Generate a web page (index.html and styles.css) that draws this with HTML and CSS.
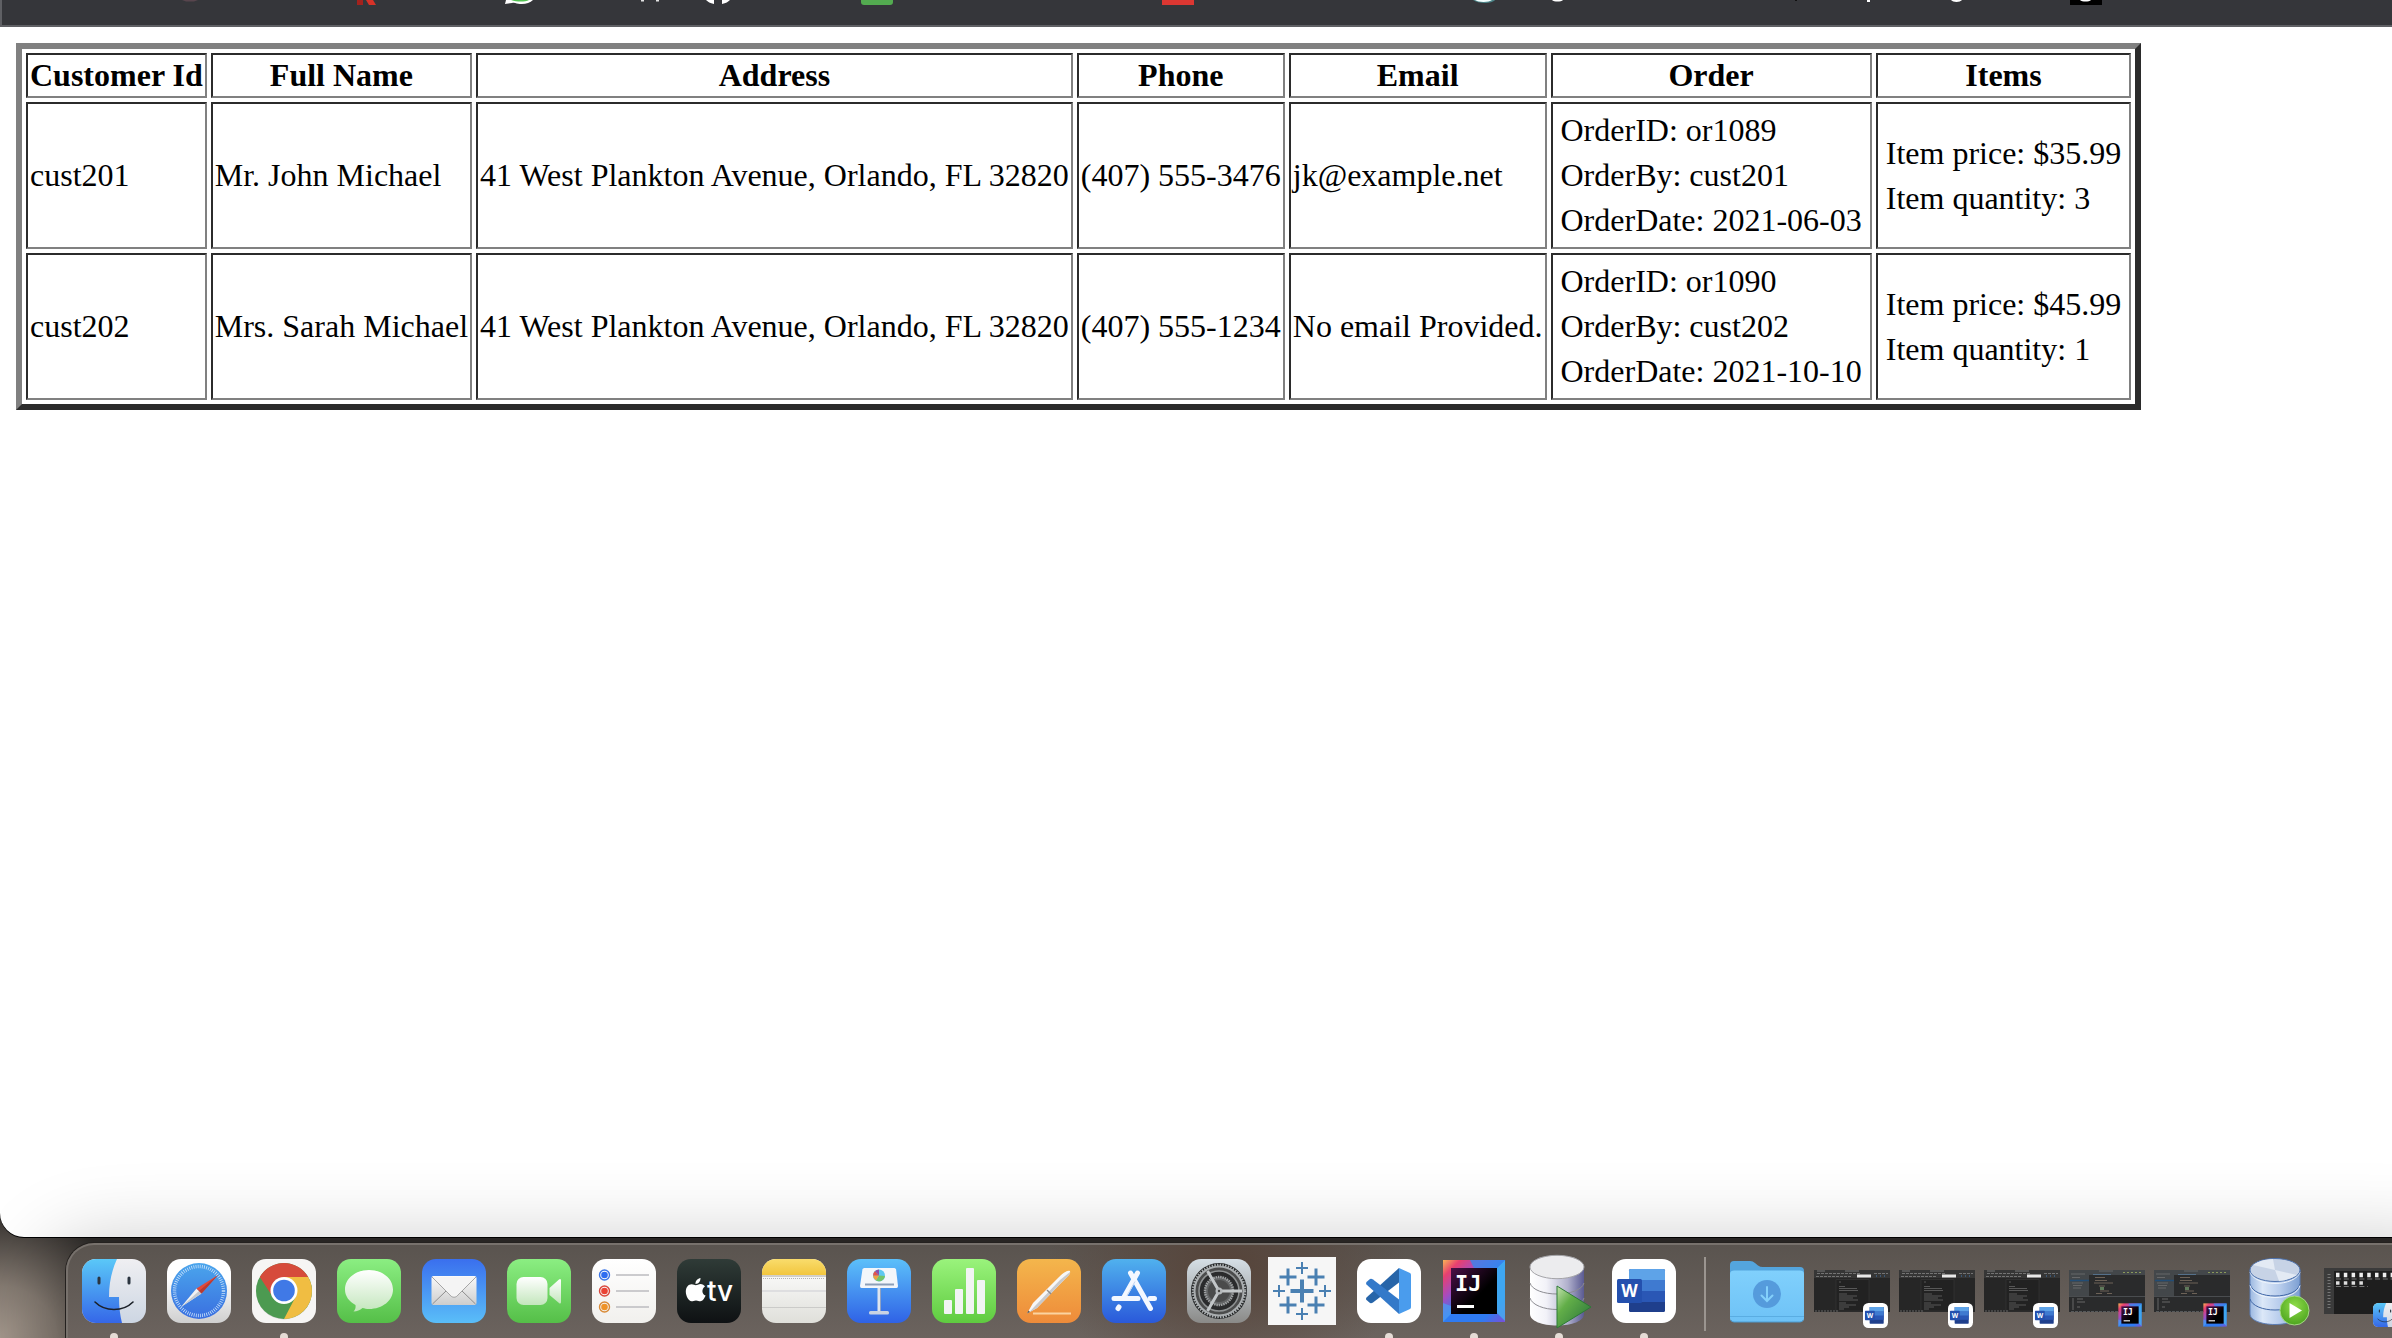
FILE: index.html
```html
<!DOCTYPE html>
<html lang="en">
<head>
<meta charset="utf-8">
<title>Customers</title>
<link rel="stylesheet" href="styles.css">
</head>
<body>
<svg class="sprites" width="0" height="0" aria-hidden="true">
  <defs>
    <linearGradient id="g-finder" x1="0" y1="0" x2="0" y2="1"><stop offset="0" stop-color="#5ac8f8"/><stop offset="1" stop-color="#3567e8"/></linearGradient>
    <linearGradient id="g-face" x1="0" y1="0" x2="0" y2="1"><stop offset="0" stop-color="#efeff2"/><stop offset="1" stop-color="#cdd6e3"/></linearGradient>
    <linearGradient id="g-white" x1="0" y1="0" x2="0" y2="1"><stop offset=".3" stop-color="#fff"/><stop offset="1" stop-color="#cfcfcf"/></linearGradient>
    <linearGradient id="g-paper" x1="0" y1="0" x2="0" y2="1"><stop offset="0" stop-color="#fff"/><stop offset="1" stop-color="#f1f0ed"/></linearGradient>
    <linearGradient id="g-note" x1="0" y1="0" x2="0" y2="1"><stop offset=".2" stop-color="#fafaf9"/><stop offset="1" stop-color="#dfdfda"/></linearGradient>
    <linearGradient id="g-yellow" x1="0" y1="0" x2="0" y2="1"><stop offset="0" stop-color="#f9dc6c"/><stop offset="1" stop-color="#f2c63e"/></linearGradient>
    <linearGradient id="g-safari" x1="0" y1="0" x2="0" y2="1"><stop offset="0" stop-color="#4aa5ec"/><stop offset="1" stop-color="#3a6fe0"/></linearGradient>
    <linearGradient id="g-green" x1="0" y1="0" x2="0" y2="1"><stop offset="0" stop-color="#8bee82"/><stop offset="1" stop-color="#55bf48"/></linearGradient>
    <linearGradient id="g-bubble" x1="0" y1="0" x2="0" y2="1"><stop offset="0" stop-color="#fff"/><stop offset="1" stop-color="#c3e6bc"/></linearGradient>
    <linearGradient id="g-mail" x1="0" y1="0" x2="0" y2="1"><stop offset="0" stop-color="#3a6fee"/><stop offset="1" stop-color="#5abef8"/></linearGradient>
    <linearGradient id="g-letter" x1="0" y1="0" x2="0" y2="1"><stop offset="0" stop-color="#fafafa"/><stop offset="1" stop-color="#cdcdcd"/></linearGradient>
    <linearGradient id="g-tv" x1="0" y1="0" x2="0" y2="1"><stop offset="0" stop-color="#2f3b37"/><stop offset="1" stop-color="#0e1113"/></linearGradient>
    <linearGradient id="g-keynote" x1="0" y1="0" x2="0" y2="1"><stop offset="0" stop-color="#5cc0fa"/><stop offset="1" stop-color="#2f62e6"/></linearGradient>
    <linearGradient id="g-numbers" x1="0" y1="0" x2="0" y2="1"><stop offset="0" stop-color="#9af37c"/><stop offset="1" stop-color="#5fcb40"/></linearGradient>
    <linearGradient id="g-pages" x1="0" y1="0" x2="0" y2="1"><stop offset="0" stop-color="#f4b64c"/><stop offset="1" stop-color="#ee8b3a"/></linearGradient>
    <linearGradient id="g-store" x1="0" y1="0" x2="0" y2="1"><stop offset="0" stop-color="#50b1ee"/><stop offset="1" stop-color="#2a59da"/></linearGradient>
    <linearGradient id="g-gear" x1="0" y1="0" x2="0" y2="1"><stop offset="0" stop-color="#d5dfe6"/><stop offset="1" stop-color="#8a8a88"/></linearGradient>
    <linearGradient id="g-ij" x1="0" y1="0" x2="1" y2="1"><stop offset="0" stop-color="#f9b456"/><stop offset=".14" stop-color="#e8406f"/><stop offset=".32" stop-color="#a54cc0"/><stop offset=".5" stop-color="#2f7bf2"/><stop offset=".8" stop-color="#2f7bf2"/><stop offset="1" stop-color="#7a4fd8"/></linearGradient>
    <linearGradient id="g-ijblack" x1="0" y1="0" x2="1" y2="1"><stop offset="0" stop-color="#4a0f48"/><stop offset=".6" stop-color="#000"/></linearGradient>
    <linearGradient id="g-db" x1="0" y1="0" x2="1" y2="0"><stop offset="0" stop-color="#fff"/><stop offset=".3" stop-color="#f2f2f8"/><stop offset=".7" stop-color="#b0b0cc"/><stop offset="1" stop-color="#5a5a92"/></linearGradient>
    <linearGradient id="g-play" x1="0" y1="0" x2="1" y2="1"><stop offset="0" stop-color="#c5e3b0"/><stop offset=".35" stop-color="#62ae48"/><stop offset="1" stop-color="#25703a"/></linearGradient>
    <linearGradient id="g-folder" x1="0" y1="0" x2="0" y2="1"><stop offset="0" stop-color="#80d0fc"/><stop offset="1" stop-color="#6ec2f6"/></linearGradient>
    <linearGradient id="g-bluedb" x1="0" y1="0" x2="1" y2="0"><stop offset="0" stop-color="#9ab7e0"/><stop offset=".25" stop-color="#dce8f8"/><stop offset=".6" stop-color="#b7ccec"/><stop offset="1" stop-color="#7c9fd2"/></linearGradient>
    <radialGradient id="g-ball" cx=".5" cy=".35" r=".65"><stop offset="0" stop-color="#8fdc4a"/><stop offset="1" stop-color="#4da51f"/></radialGradient>
  </defs>

  <symbol id="i-finder" viewBox="0 0 64 64">
    <rect width="64" height="64" rx="14" fill="url(#g-face)"/>
    <path d="M35 0H14A14 14 0 0 0 0 14V50A14 14 0 0 0 14 64H40C38 56 37 48 37 38H27C27 23 30 11 35 0Z" fill="url(#g-finder)"/>
    <path d="M17 19v5M47 19v5" stroke="#2b3540" stroke-width="3" stroke-linecap="round"/>
    <path d="M13 43C23 53 41 53 51 43" fill="none" stroke="#1b2028" stroke-width="1.6" stroke-linecap="round"/>
  </symbol>

  <symbol id="i-word" viewBox="0 0 64 64">
    <rect width="64" height="64" rx="14" fill="#fff"/>
    <rect x="17" y="10" width="36" height="43" rx="1.5" fill="#1f3f8c"/>
    <path d="M17 21h36v22H17z" fill="#2a57b5"/>
    <path d="M17 21h36v11H17z" fill="#3f7ad0"/>
    <path d="M18.500 10h33a1.500 1.500 0 0 1 1.500 1.500V21H17v-9.500a1.500 1.500 0 0 1 1.500-1.500z" fill="#5ea3e8"/>
    <rect x="5" y="20" width="25" height="24" rx="1.500" fill="#2450ae"/>
    <text class="word-letter" x="17.500" y="38" text-anchor="middle">W</text>
  </symbol>

  <symbol id="i-idea" viewBox="0 0 64 64">
    <rect x="1" y="1" width="62" height="62" fill="url(#g-ij)"/>
    <path d="M63 1v61L55 54V9z" fill="#44b4f0" opacity=".75"/>
    <path d="M1 63V44l8 3v8z" fill="#4aa0f4" opacity=".7"/>
    <path d="M28 1h35l-8 8H32z" fill="#3a86ee" opacity=".8"/>
    <rect x="9" y="9" width="46" height="46" fill="url(#g-ijblack)"/>
    <text class="idea-letters" x="13" y="32">IJ</text>
    <path d="M15 46h17v3H15z" fill="#fff"/>
  </symbol>

  <symbol id="i-docs" viewBox="0 0 76 42">
    <rect width="76" height="42" fill="#262626"/>
    <path d="M0 0h76v8H0z" fill="#363636"/>
    <path d="M3 1h8M31 1h14" stroke="#8a8a8a" stroke-width=".8"/>
    <path d="M3 3.500h44M60 3.500h14M2 6.500h36" stroke="#737373" stroke-width="1" stroke-dasharray="3 1"/>
    <path d="M43 4.500h14v3H43z" fill="#e8e8e8"/>
    <path d="M62 6h10" stroke="#4378b0" stroke-dasharray="1 3"/>
    <path d="M22 9.500h33V41H22z" fill="#222" stroke="#3b3b3b" stroke-width=".6"/>
    <path d="M25 12h2M25 16.500h6M25 18.500h18M25 20.500h19M25 24h8M25 26h18M25 28h14M25 30h19M25 33h7M25 35h17M25 37h10M25 39h5" stroke="#666" stroke-width=".8"/>
    <path d="M1 41h24M62 41h12" stroke="#777" stroke-width=".8" stroke-dasharray="2 1"/>
  </symbol>

  <symbol id="i-code" viewBox="0 0 76 42">
    <rect width="76" height="42" fill="#2a2b2c"/>
    <path d="M0 0h76v5H0zM0 0h20v27H0z" fill="#43474a"/>
    <path d="M30 1h14M2 4h14" stroke="#777" stroke-width=".7"/>
    <path d="M54 2.500h20" stroke="#8a9a5a" stroke-width="1" stroke-dasharray="2 2"/>
    <path d="M24 4.500h18" stroke="#54708a"/>
    <path d="M1 10.500h19" stroke="#234d75" stroke-width="1.500"/>
    <path d="M3 7.500h8M3 13h11M4 15.500h9M4 18h8" stroke="#777" stroke-width=".7"/>
    <path d="M26 7.500h10M26 10.500h12M25 13h19M30 16h6M31 21h9M27 23.500h6M38 23.500h5" stroke="#75695c" stroke-width=".9"/>
    <path d="M31 17h4v3h-4z" fill="#5f7a5b"/>
    <path d="M0 26.500h76" stroke="#4a4d50"/>
    <path d="M4 28v12M8 29h6M8 32h8M8 37h3" stroke="#777" stroke-width=".8"/>
    <path d="M2 41.500h50" stroke="#55585a" stroke-dasharray="3 1"/>
  </symbol>
</svg>

<div class="window">
  <header class="toolbar">
    <svg class="bookmarks" width="2390" height="5" viewBox="2 0 2390 5" aria-hidden="true">
      <path d="M182 0h16l-4 1.500h-8z" fill="#58454d"/>
      <path d="M357 0h6v5h-6z" fill="#a3221d"/><path d="M366 0h7l3 5h-7z" fill="#d63228"/>
      <path d="M506 0h27c-3 3-8 4.500-13 4c-3 0-5-2-8-1l-7 1z" fill="#fff"/><path d="M511 0h18c-4 2-12 2-18 0z" fill="#53c353"/>
      <path d="M641 0h3v1.500h-3zM656 0h3v1.500h-3z" fill="#e4e4e4"/>
      <path d="M706 0h8v4c-4-1-6-2-8-4zM722 0h8c-2 2-4 3-8 4z" fill="#fff"/>
      <path d="M861 0h32v2a3 3 0 0 1-3 3h-26a3 3 0 0 1-3-3z" fill="#53ab50"/>
      <path d="M1162 0h32v5h-32z" fill="#dc3732"/>
      <path d="M1473 0h22c-3 4-17 4-22 0z" fill="#4c8588"/><path d="M1475 0h17c-3 2.500-14 2.500-17 0z" fill="#f3ffff"/>
      <path d="M1552 0h11c-2 2-9 2-11 0z" fill="#fff"/>
      <path d="M1795 0h2v1h-2z" fill="#111"/>
      <path d="M1867 0h3v2h-3z" fill="#fff"/>
      <path d="M1951 0h11c-2 2.500-9 2.500-11 0z" fill="#fff"/>
      <path d="M2070 0h32v5h-32z" fill="#000"/><path d="M2080 0h11c-2 2-9 2-11 0z" fill="#fff"/>
    </svg>
  </header>

  <main class="page">
    <table class="customers">
      <thead>
        <tr><th>Customer Id</th><th>Full Name</th><th>Address</th><th>Phone</th><th>Email</th><th>Order</th><th>Items</th></tr>
      </thead>
      <tbody>
        <tr>
          <td>cust201</td><td>Mr. John Michael</td><td>41 West Plankton Avenue, Orlando, FL 32820</td><td>(407) 555-3476</td><td>jk@example.net</td>
          <td><table class="details"><tr><td>OrderID: or1089</td></tr><tr><td>OrderBy: cust201</td></tr><tr><td>OrderDate: 2021-06-03</td></tr></table></td>
          <td><table class="details"><tr><td>Item price: $35.99</td></tr><tr><td>Item quantity: 3</td></tr></table></td>
        </tr>
        <tr>
          <td>cust202</td><td>Mrs. Sarah Michael</td><td>41 West Plankton Avenue, Orlando, FL 32820</td><td>(407) 555-1234</td><td>No email Provided.</td>
          <td><table class="details"><tr><td>OrderID: or1090</td></tr><tr><td>OrderBy: cust202</td></tr><tr><td>OrderDate: 2021-10-10</td></tr></table></td>
          <td><table class="details"><tr><td>Item price: $45.99</td></tr><tr><td>Item quantity: 1</td></tr></table></td>
        </tr>
      </tbody>
    </table>
  </main>
</div>

<nav class="dock" aria-label="Dock">
  <div class="apps">
    <button class="app running" aria-label="Finder"><svg viewBox="0 0 64 64"><use href="#i-finder" width="64" height="64"/></svg></button>

    <button class="app" aria-label="Safari"><svg viewBox="0 0 64 64">
      <rect width="64" height="64" rx="14" fill="url(#g-white)"/>
      <circle cx="32" cy="32" r="28" fill="url(#g-safari)"/>
      <circle cx="32" cy="32" r="24.500" fill="none" stroke="#c9e2fa" stroke-width="3.500" stroke-dasharray=".8 1.340"/>
      <path d="M14 48L29.500 29.500L34.500 34.500Z" fill="#f2f2f2"/>
      <path d="M51 16L29.500 29.500L34.500 34.500Z" fill="#e0493c"/>
      <path d="M14 48L34.500 34.500L32 32Z" fill="#c4c9cf"/><path d="M51 16L34.500 34.500L32 32Z" fill="#b93a31"/>
    </svg></button>

    <button class="app running" aria-label="Chrome"><svg viewBox="0 0 64 64">
      <rect width="64" height="64" rx="14" fill="#f6f5f4"/>
      <circle cx="32" cy="32.500" r="28" fill="#b9b9b9" opacity=".6"/>
      <circle cx="32" cy="32" r="28" fill="#4c9a51"/>
      <path d="M7.800 18A28 28 0 0 1 56.200 18H32L20.500 37.600Z" fill="#d64b3b"/>
      <path d="M56.200 18A28 28 0 0 1 32 60L43.500 38L32 18Z" fill="#f0bd42"/>
      <circle cx="32" cy="31.500" r="13.500" fill="#fff"/><circle cx="32" cy="31.500" r="10.800" fill="#4079e6"/>
    </svg></button>

    <button class="app" aria-label="Messages"><svg viewBox="0 0 64 64">
      <rect width="64" height="64" rx="14" fill="url(#g-green)"/>
      <path d="M32 11C18.500 11 8 19.500 8 30.500C8 37 12 42.500 18.500 46C19 49 18 51 16.500 52.500C20 52.500 23 51 25.500 49C27.500 49.500 29.500 50 32 50C45.500 50 56 41.500 56 30.500S45.500 11 32 11Z" fill="url(#g-bubble)"/>
    </svg></button>

    <button class="app" aria-label="Mail"><svg viewBox="0 0 64 64">
      <rect width="64" height="64" rx="14" fill="url(#g-mail)"/>
      <rect x="9.500" y="17" width="45" height="29" rx="2" fill="url(#g-letter)"/>
      <path d="M10.500 45L24 32M53.500 45L40 32" stroke="#8e8e8e"/>
      <path d="M10 18L28 36C30 39 34 39 36 36L54 18" fill="#f4f4f4" stroke="#a5a5a5"/>
    </svg></button>

    <button class="app" aria-label="FaceTime"><svg viewBox="0 0 64 64">
      <rect width="64" height="64" rx="14" fill="url(#g-green)"/>
      <rect x="9.500" y="18" width="31" height="28" rx="7" fill="url(#g-bubble)"/>
      <path d="M42.500 29L52 20.500C53 19.500 54 20 54 21.500V43C54 44.500 53 45 52 44L42.500 36Z" fill="url(#g-bubble)"/>
    </svg></button>

    <button class="app" aria-label="Reminders"><svg viewBox="0 0 64 64">
      <rect width="64" height="64" rx="14" fill="url(#g-paper)"/>
      <g fill="none" stroke-width="1.400"><circle cx="12.500" cy="16" r="5" stroke="#3a74e6"/><circle cx="12.500" cy="32" r="5" stroke="#d9473c"/><circle cx="12.500" cy="48" r="5" stroke="#d98a36"/></g>
      <circle cx="12.500" cy="16" r="3.300" fill="#2f6df0"/><circle cx="12.500" cy="32" r="3.300" fill="#ea4335"/><circle cx="12.500" cy="48" r="3.300" fill="#ee9328"/>
      <path d="M24 16h33M24 32h33M24 48h33" stroke="#bcbcc0" stroke-width="1.600"/>
    </svg></button>

    <button class="app" aria-label="TV"><svg viewBox="0 0 64 64">
      <rect width="64" height="64" rx="14" fill="url(#g-tv)"/>
      <path d="M23.500 19C23.700 22 21.500 25 18.500 25C18.200 22 20.800 19.300 23.500 19ZM18.800 26.300C20 26.300 21.500 25 23.600 25C25.500 25 27 26 28 27.400C24.200 30 24.800 35 28.600 36.600C27.500 39.500 25.500 42.300 23.400 42.300C21.600 42.300 21.200 41.400 19 41.400C16.800 41.400 16.200 42.300 14.600 42.300C11.500 42.300 8.800 37 8.800 32.600C8.800 28 11.600 25.300 14.600 25.300C16.500 25.300 17.800 26.300 18.800 26.300Z" fill="#fff"/>
      <text class="tv-letters" x="30" y="42">tv</text>
    </svg></button>

    <button class="app" aria-label="Notes"><svg viewBox="0 0 64 64">
      <rect width="64" height="64" rx="14" fill="url(#g-note)"/>
      <path d="M0 16V14A14 14 0 0 1 14 0H50A14 14 0 0 1 64 14V16Z" fill="url(#g-yellow)"/>
      <path d="M0 17h64" stroke="#aaa69c"/><path d="M1 19.500h62" stroke="#b5b5b5" stroke-dasharray="1 1"/>
      <path d="M0 32h64" stroke="#dedee0" stroke-width="2"/><path d="M0 48.500h64" stroke="#cbcbc9"/>
    </svg></button>

    <button class="app" aria-label="Keynote"><svg viewBox="0 0 64 64">
      <rect width="64" height="64" rx="14" fill="url(#g-keynote)"/>
      <path d="M30.500 28h3v25h-3z" fill="#dfe5ee"/><path d="M33 28h1v25h-1z" fill="#8fa2c4"/>
      <rect x="22" y="52" width="20" height="3.500" rx="1.500" fill="#c9d3e3"/>
      <path d="M17 9H47.500L49 10L51 27Q51 29 49.500 29H14.500Q13 29 13 27L15.500 10Z" fill="#f3f6fa"/>
      <path d="M18 24.500h29v2H18z" fill="#8c9fb8"/>
      <circle cx="32" cy="16.500" r="6" fill="#5ec8f0"/>
      <path d="M32 16.500L38 17A6 6 0 0 1 29 21.500Z" fill="#74c46a"/><path d="M32 16.500L29 21.500A6 6 0 0 1 26 16.500Z" fill="#f0a23c"/><path d="M32 16.500L26 16.500A6 6 0 0 1 28 12Z" fill="#e5534b"/><path d="M32 16.500L28 12A6 6 0 0 1 32 10.500Z" fill="#8e4ea6"/>
    </svg></button>

    <button class="app" aria-label="Numbers"><svg viewBox="0 0 64 64">
      <rect width="64" height="64" rx="14" fill="url(#g-numbers)"/>
      <g fill="#f1f4f3"><rect x="12" y="41" width="8" height="14" rx="1"/><rect x="23" y="30" width="8" height="25" rx="1"/><rect x="34" y="9" width="8" height="46" rx="1"/><rect x="45" y="21" width="8" height="34" rx="1"/></g>
    </svg></button>

    <button class="app" aria-label="Pages"><svg viewBox="0 0 64 64">
      <rect width="64" height="64" rx="14" fill="url(#g-pages)"/>
      <path d="M16 54.500h38" stroke="#fbd3a0" stroke-width="2"/>
      <path d="M53 12C50 11 46 14 41 19L16 44L10 54.500L20 49L45 23C50 18 54 15 53 12Z" fill="#f7f7f7"/>
      <path d="M53 13C54 15 50 18 45 23L20 49L12 53.500L18 47L43 21Z" fill="#c9c9cb"/>
      <path d="M30 31l4 4" stroke="#8c8c8c" stroke-width="1.500"/><path d="M10 54.500l1.500-3 1.500 1.500z" fill="#555"/>
    </svg></button>

    <button class="app" aria-label="App Store"><svg viewBox="0 0 64 64">
      <rect width="64" height="64" rx="14" fill="url(#g-store)"/>
      <g stroke-width="5" stroke-linecap="round" stroke="#f4f8ff"><path d="M28.500 14L48.500 49.500"/><path d="M12 39.500H36M48 39.500H52.500"/><path d="M35.500 14L22 38"/><path d="M17 48L16 49.500"/></g>
      <path d="M33 22.500L25 36.500" stroke="#c4d7f2" stroke-width="1"/>
    </svg></button>

    <button class="app" aria-label="System Preferences"><svg viewBox="0 0 64 64">
      <rect width="64" height="64" rx="14" fill="url(#g-gear)"/>
      <circle cx="32" cy="32" r="28" fill="#1f2122"/>
      <circle cx="32" cy="32" r="24.500" fill="#4b4c4c" stroke="#a9adaf" stroke-width="2"/>
      <circle cx="32" cy="32" r="26" fill="none" stroke="#a9adaf" stroke-width="2.500" stroke-dasharray="1.500 1.220"/>
      <circle cx="32" cy="32" r="20" fill="#2a2b2c" stroke="#8f9293" stroke-width="1.500"/>
      <circle cx="32" cy="32" r="14" fill="#636566" stroke="#9ea1a2" stroke-width="2.500" stroke-dasharray="1.500 .8"/>
      <circle cx="32" cy="32" r="11" fill="#4a4b4b"/>
      <path d="M32 32H55M32 32L20.500 12M32 32L20.500 52" stroke="#c2c6c8" stroke-width="3"/>
      <circle cx="32" cy="32" r="3.500" fill="#b5b9bb"/><circle cx="32" cy="32" r="1.200" fill="#444"/>
    </svg></button>

    <button class="app" aria-label="Tableau"><svg viewBox="0 0 64 64">
      <rect x="-4" y="-2" width="68" height="68" fill="#f6f6f6"/>
      <g stroke="#4a80b2" fill="none">
        <path d="M30 20.500v23M18.500 32h23" stroke-width="4"/>
        <path d="M16 9.500v17M7.500 18h17M44 9.500v17M35.500 18h17M16 37.500v17M7.500 46h17M44 37.500v17M35.500 46h17" stroke-width="3"/>
        <path d="M30 3v12M24 9h12M30 49v12M24 55h12M7 26v12M1 32h12M53 26v12M47 32h12" stroke-width="2"/>
      </g>
    </svg></button>

    <button class="app running" aria-label="Visual Studio Code"><svg viewBox="0 0 64 64">
      <rect width="64" height="64" rx="14" fill="#fff"/>
      <path d="M42 9L9.500 38.500Q8.500 40 9.500 41L13 44Q14.500 44.500 16 43.500L42 23.500Z" fill="#2765a9"/>
      <path d="M42 55L9.500 25.500Q8.500 24 9.500 23L13 20Q14.500 19.500 16 20.500L42 40.500Z" fill="#3379c9"/>
      <path d="M42 9L53 14Q54 14.500 54 16V48Q54 49.500 53 50L42 55Z" fill="#4a9ced"/>
    </svg></button>

    <button class="app running" aria-label="IntelliJ IDEA"><svg viewBox="0 0 64 64"><use href="#i-idea" width="64" height="64"/></svg></button>

    <button class="app running" aria-label="SQL Developer"><svg viewBox="0 0 64 64">
      <path d="M3 8V55C3 62 15 66.500 30 66.500S57 62 57 55V8Z" fill="url(#g-db)"/>
      <path d="M3 24C5 31 17 35 30 35S55 31 57 24M3 39C5 46 17 50.500 30 50.500S55 46 57 39" fill="none" stroke="#8c8c92"/>
      <ellipse cx="30" cy="8" rx="27" ry="11.700" fill="#ececee" stroke="#a4a4a8"/>
      <path d="M30 27L64 48L30 69Z" fill="url(#g-play)" stroke="#2c7a36"/>
    </svg></button>

    <button class="app running" aria-label="Word"><svg viewBox="0 0 64 64"><use href="#i-word" width="64" height="64"/></svg></button>
  </div>

  <div class="divider"></div>

  <div class="windows">
    <button class="tile" aria-label="Downloads"><svg viewBox="0 0 76 64">
      <path d="M1 6Q1 2 5 2H21Q24 2 26 4L29 6.500Q31 8 34 8H71Q75 8 75 12V58H1Z" fill="#54a5dd"/>
      <path d="M1 15Q1 11.500 5 11.500H71Q75 11.500 75 15V59Q75 63 71 63H5Q1 63 1 59Z" fill="url(#g-folder)"/>
      <path d="M1 57.500h74" stroke="#5aade2"/><path d="M2 61Q3 63 5 63H71Q73 63 74 61" fill="none" stroke="#4d9cd2"/>
      <circle cx="38" cy="35" r="14" fill="#559bdc"/>
      <path d="M38 28v13.500M32.500 36.500L38 42L43.500 36.500" fill="none" stroke="#84d0fb" stroke-width="2" stroke-linecap="round"/>
    </svg></button>
    <button class="tile" aria-label="Word window 1"><svg viewBox="0 0 76 64"><use href="#i-docs" y="11" width="76" height="42"/><use href="#i-word" x="49" y="44" width="25" height="25"/></svg></button>
    <button class="tile" aria-label="Word window 2"><svg viewBox="0 0 76 64"><use href="#i-docs" y="11" width="76" height="42"/><use href="#i-word" x="49" y="44" width="25" height="25"/></svg></button>
    <button class="tile" aria-label="Word window 3"><svg viewBox="0 0 76 64"><use href="#i-docs" y="11" width="76" height="42"/><use href="#i-word" x="49" y="44" width="25" height="25"/></svg></button>
    <button class="tile" aria-label="IntelliJ window 1"><svg viewBox="0 0 76 64"><use href="#i-code" y="11" width="76" height="42"/><use href="#i-idea" x="49" y="44" width="24" height="24"/></svg></button>
    <button class="tile" aria-label="IntelliJ window 2"><svg viewBox="0 0 76 64"><use href="#i-code" y="11" width="76" height="42"/><use href="#i-idea" x="49" y="44" width="24" height="24"/></svg></button>
    <button class="tile" aria-label="SQL Developer window"><svg viewBox="0 0 76 64">
      <path d="M11 11V55C11 61 22 65.500 36 65.500S61 61 61 55V11Z" fill="url(#g-bluedb)" stroke="#5b7db5"/>
      <path d="M11 25C13 33 24 37 36 37S59 33 61 25M11 40C13 47 24 51 36 51S59 47 61 40" fill="none" stroke="#3f66a6"/>
      <path d="M11 26.500C13 34.500 24 38.500 36 38.500S59 34.500 61 26.500M11 13C13 20 24 24.500 36 24.500S59 20 61 13" fill="none" stroke="#eef4fc"/>
      <ellipse cx="36" cy="11" rx="25" ry="11.500" fill="#c7d3e6" stroke="#4d72ae"/>
      <path d="M36 11L14 6Q22 0 34 0ZM36 11L58 16Q50 21 40 22Z" fill="#e3eaf4"/>
      <circle cx="55.500" cy="51.500" r="14.500" fill="url(#g-ball)" stroke="#a5d886"/>
      <path d="M50.500 44V59L63 51.500Z" fill="#fff"/>
    </svg></button>
    <button class="tile" aria-label="Finder window"><svg viewBox="0 0 76 64">
      <rect y="9" width="90" height="46" rx="1" fill="#1e1e1e"/><path d="M0 9h90v3H0zM0 9h10v46H0z" fill="#3b3b3b"/>
      <path d="M5 15v34" stroke="#777" stroke-width="3" stroke-dasharray="1 2"/>
      <path d="M12 16h78" stroke="#eee" stroke-width="4.500" stroke-dasharray="3.500 4.300"/><path d="M12 24h30" stroke="#ddd" stroke-width="3.500" stroke-dasharray="3.500 4.300"/>
      <path d="M12 20h78M12 27.500h32" stroke="#777" stroke-width="1" stroke-dasharray="5 2.800"/>
      <use href="#i-finder" x="49" y="44" width="24" height="24"/>
    </svg></button>
  </div>
</nav>
</body>
</html>
```
FILE: styles.css
```css
* {
  box-sizing: border-box;
}

body {
  margin: 0;
  height: 100vh;
  overflow: hidden;
  display: flex;
  flex-direction: column;
  background: radial-gradient(ellipse 140px 130px at 0 100%, #a3978c 0%, #857b72 40%, #2d2a28 100%);
  font-family: "Liberation Serif", "Times New Roman", serif;
  font-size: 32px;
  line-height: 37px;
  color: #000;
}

/* Shared gradients and symbols; takes no room in the layout */
.sprites {
  position: absolute;
}

.window {
  flex: 1;
  min-height: 0;
  display: flex;
  flex-direction: column;
  overflow: hidden;
  background: #fff;
  border-bottom-left-radius: 24px;
  box-shadow: 0 1px 0 #000;
}

.toolbar {
  height: 27px;
  flex: none;
  overflow: hidden;
  background: #35363a;
  border-bottom: 2px solid #5f6064;
  border-left: 2px solid #5f6064;
}

.bookmarks {
  display: block;
}

.page {
  padding: 16px;
}

.customers {
  border: 6px solid;
  border-color: #808080 #2b2b2b #2b2b2b #808080;
  border-spacing: 4px;
  white-space: nowrap;
}

.customers th,
.customers td {
  padding: 2px;
  border: 2px solid;
  border-color: #2b2b2b #808080 #808080 #2b2b2b;
}

.customers .details {
  border-spacing: 4px;
}

.customers .details td {
  border: 0;
}

.dock {
  flex: none;
  height: 95px;
  margin: 6px -40px 0 66px;
  padding: 14px 0 0 14px;
  display: flex;
  align-items: flex-start;
  border: 2px solid #77716c;
  border-bottom: 0;
  border-top-left-radius: 28px;
  background:
    radial-gradient(ellipse 180px 120px at 1160px 20px, #56443a, transparent),
    linear-gradient(#5a544f, #6b635e);
  box-shadow: 0 0 0 1px #24211f, 0 20px 80px 20px rgba(0, 0, 0, 0.22);
}

.apps {
  display: flex;
  gap: 21px;
}

.windows {
  display: flex;
  gap: 9px;
}

.divider {
  flex: none;
  width: 2px;
  height: 74px;
  margin: -2px 23px 0 28px;
  background: #9b9590;
}

.app,
.tile {
  flex: none;
  width: 64px;
  height: 82px;
  padding: 0;
  border: 0;
  background: none;
  display: flex;
  flex-direction: column;
  align-items: center;
  gap: 10px;
}

.tile {
  width: 76px;
}

.app svg,
.tile svg {
  display: block;
  flex: none;
  width: 100%;
  height: 64px;
  overflow: visible;
}

.running::after {
  content: "";
  flex: none;
  width: 8px;
  height: 8px;
  border-radius: 4px;
  background: #e6dcd6;
}

.word-letter {
  font: bold 17px "Open Sans", sans-serif;
  fill: #fff;
}

.idea-letters {
  font: bold 22px "DejaVu Sans Mono", monospace;
  fill: #fff;
}

.tv-letters {
  font: 500 28px Inter, sans-serif;
  fill: #fff;
}
```
